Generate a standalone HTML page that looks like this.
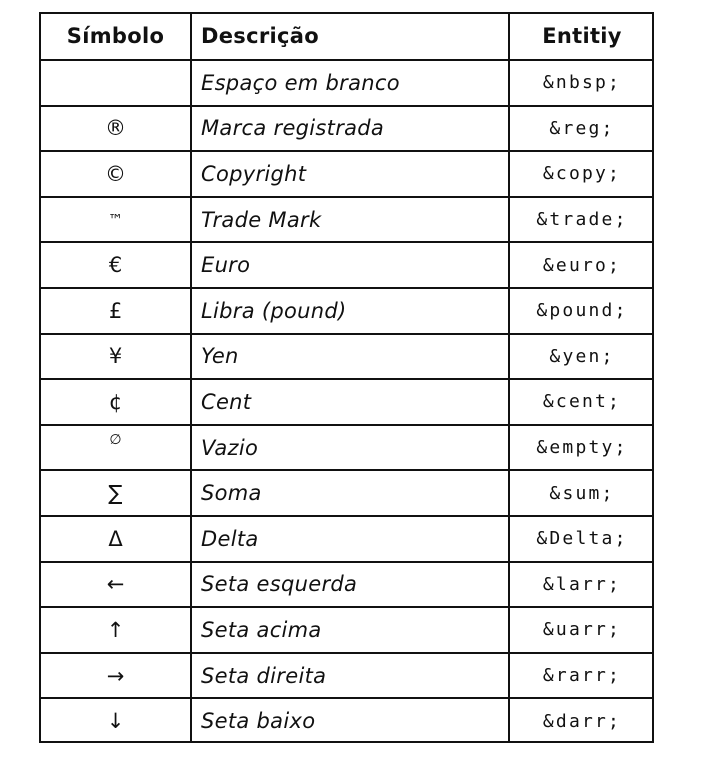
<!DOCTYPE html>
<html><head><meta charset="utf-8"><style>
body{margin:0;background:#fff;width:702px;height:768px;overflow:hidden;font-family:"DejaVu Sans","Liberation Sans",sans-serif;color:#111;}
.t{position:absolute;left:39px;top:12px;width:611px;height:727px;border:2px solid #111;}
.r{position:absolute;left:0;width:611px;height:45.6px;border-top:2px solid #111;box-sizing:border-box;}
.r.h{border-top:none;}
.c{position:absolute;top:0;bottom:0;display:flex;align-items:center;font-size:21px;}
.s{left:0;width:149px;justify-content:center;}
.d{left:149px;width:318px;border-left:2px solid #111;padding-left:9px;box-sizing:border-box;font-style:italic;letter-spacing:0.3px;}
.e{left:467px;width:144px;border-left:2px solid #111;justify-content:center;font-family:"DejaVu Sans Mono","Liberation Mono",monospace;font-size:18px;letter-spacing:2.2px;}
.h .c{font-weight:bold;font-style:normal;font-family:"DejaVu Sans",sans-serif;font-size:21px;letter-spacing:0.3px;}
</style></head><body>
<div class="t">
<div class="r h" style="top:-0.6px"><div class="c s">Símbolo</div><div class="c d">Descrição</div><div class="c e">Entitiy</div></div>
<div class="r" style="top:45px"><div class="c s"></div><div class="c d">Espaço em branco</div><div class="c e">&amp;nbsp;</div></div>
<div class="r" style="top:90.6px"><div class="c s">®</div><div class="c d">Marca registrada</div><div class="c e">&amp;reg;</div></div>
<div class="r" style="top:136.2px"><div class="c s">©</div><div class="c d">Copyright</div><div class="c e">&amp;copy;</div></div>
<div class="r" style="top:181.8px"><div class="c s" style="font-size:15px">™</div><div class="c d">Trade Mark</div><div class="c e">&amp;trade;</div></div>
<div class="r" style="top:227.4px"><div class="c s">€</div><div class="c d">Euro</div><div class="c e">&amp;euro;</div></div>
<div class="r" style="top:273px"><div class="c s">£</div><div class="c d">Libra (pound)</div><div class="c e">&amp;pound;</div></div>
<div class="r" style="top:318.6px"><div class="c s">¥</div><div class="c d">Yen</div><div class="c e">&amp;yen;</div></div>
<div class="r" style="top:364.2px"><div class="c s">¢</div><div class="c d">Cent</div><div class="c e">&amp;cent;</div></div>
<div class="r" style="top:409.8px"><div class="c s" style="font-size:14px;align-items:flex-start;padding-top:6px;box-sizing:border-box">∅</div><div class="c d">Vazio</div><div class="c e">&amp;empty;</div></div>
<div class="r" style="top:455.4px"><div class="c s">∑</div><div class="c d">Soma</div><div class="c e">&amp;sum;</div></div>
<div class="r" style="top:501px"><div class="c s">Δ</div><div class="c d">Delta</div><div class="c e">&amp;Delta;</div></div>
<div class="r" style="top:546.6px"><div class="c s">←</div><div class="c d">Seta esquerda</div><div class="c e">&amp;larr;</div></div>
<div class="r" style="top:592.2px"><div class="c s">↑</div><div class="c d">Seta acima</div><div class="c e">&amp;uarr;</div></div>
<div class="r" style="top:637.8px"><div class="c s">→</div><div class="c d">Seta direita</div><div class="c e">&amp;rarr;</div></div>
<div class="r" style="top:683.4px"><div class="c s">↓</div><div class="c d">Seta baixo</div><div class="c e">&amp;darr;</div></div>
</div>
</body></html>
